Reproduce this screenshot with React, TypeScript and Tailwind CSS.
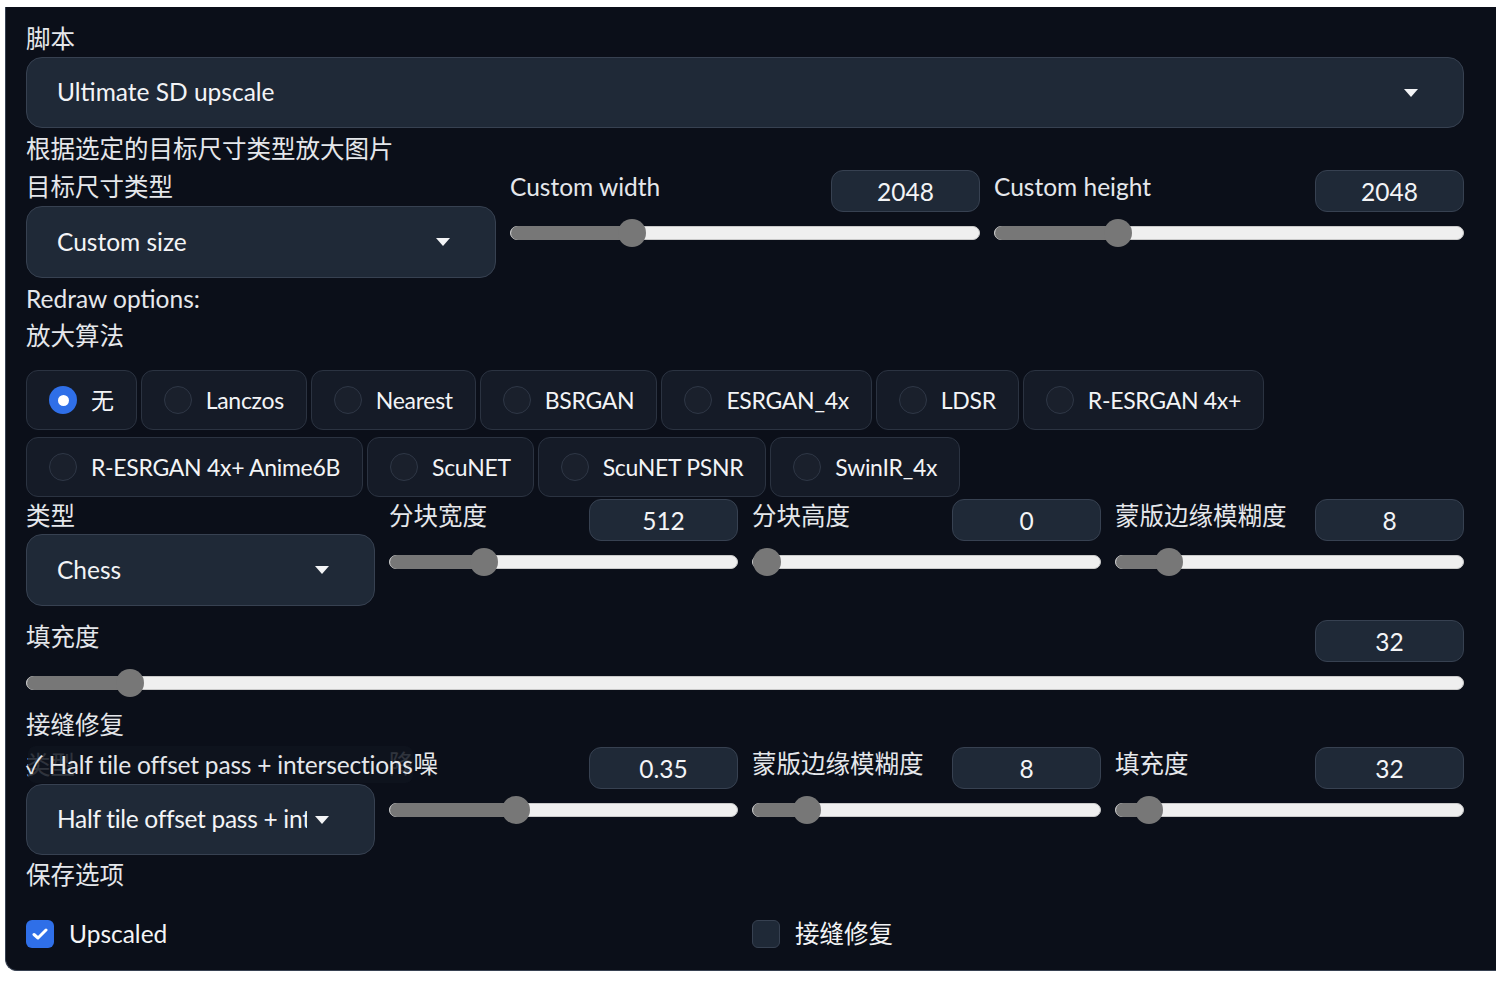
import React from 'react';

const font = { fontFamily: 'Lato, "Noto Sans CJK SC", sans-serif' };

const Caret: React.FC = () => (
  <svg width="14" height="8" viewBox="0 0 14 8" className="shrink-0">
    <polygon points="0,0 14,0 7,8" fill="#f3f4f6" />
  </svg>
);

const Label: React.FC<{ children: React.ReactNode; className?: string }> = ({ children, className = '' }) => (
  <div className={`h-[28px] leading-[28px] text-[24.5px] text-[#e5e7eb] whitespace-nowrap ${className}`}>{children}</div>
);

const Dropdown: React.FC<{ value: string; h?: string; clip?: boolean }> = ({ value, h = 'h-[72px]', clip }) => (
  <div className={`${h} flex items-center justify-between pl-[30px] pr-[45px] rounded-2xl bg-[#1f2937] border border-[#374151] text-[24.5px] text-[#f3f4f6]`}>
    {clip ? (
      <span className="w-[250px] overflow-hidden whitespace-nowrap tracking-[-0.3px]">{value}</span>
    ) : (
      <span className="whitespace-nowrap">{value}</span>
    )}
    <Caret />
  </div>
);

const NumBox: React.FC<{ value: string }> = ({ value }) => (
  <div className="w-[149px] h-[42px] shrink-0 flex items-center justify-center pt-[2px] rounded-xl bg-[#1f2937] border border-[#374151] text-[24.5px] text-[#f3f4f6]">
    {value}
  </div>
);

const Slider: React.FC<{ at: number }> = ({ at }) => (
  <div className="h-[28px] flex items-center">
    <div className="relative w-full h-[14px] rounded-full bg-[#efefef] border border-[#c9c9c9]">
      <div className="absolute left-0 top-[-1px] h-[14px] rounded-l-full bg-[#777777]" style={{ width: at }} />
      <div className="absolute top-1/2 w-[28px] h-[28px] -mt-[14px] rounded-full bg-[#777777]" style={{ left: at - 14 }} />
    </div>
  </div>
);

const SliderField: React.FC<{ label: string; value: string; at: number }> = ({ label, value, at }) => (
  <div className="flex flex-col">
    <div className="h-[42px] flex items-start justify-between">
      <Label className="mt-[3px]">{label}</Label>
      <NumBox value={value} />
    </div>
    <div className="mt-[7px]">
      <Slider at={at} />
    </div>
  </div>
);

const Radio: React.FC<{ label: string; checked?: boolean }> = ({ label, checked }) => (
  <div className="h-[60px] flex items-center gap-[14px] pl-[22px] pr-[22px] rounded-xl bg-[#151b27] border border-[#2b3341] text-[23px] tracking-[-0.3px] text-[#f3f4f6] whitespace-nowrap">
    {checked ? (
      <span className="w-[28px] h-[28px] rounded-full bg-[#2f6fe8] flex items-center justify-center">
        <span className="w-[11px] h-[11px] rounded-full bg-white" />
      </span>
    ) : (
      <span className="w-[28px] h-[28px] rounded-full bg-[#1a202c] border border-[#2f3746]" />
    )}
    <span>{label}</span>
  </div>
);

const Check: React.FC<{ label: string; checked?: boolean }> = ({ label, checked }) => (
  <div className="h-[28px] flex items-center gap-[15px] text-[24.5px] text-[#f3f4f6]">
    {checked ? (
      <span className="w-[28px] h-[28px] rounded-md bg-[#2f6fe8] flex items-center justify-center">
        <svg width="16" height="12" viewBox="0 0 16 12">
          <path d="M2 6.5 L6 10 L14 2" stroke="white" strokeWidth="3" fill="none" strokeLinecap="round" strokeLinejoin="round" />
        </svg>
      </span>
    ) : (
      <span className="w-[28px] h-[28px] rounded-md bg-[#1f2937] border border-[#374151]" />
    )}
    <span>{label}</span>
  </div>
);

export default function App() {
  const row1 = ['Lanczos', 'Nearest', 'BSRGAN', 'ESRGAN_4x', 'LDSR', 'R-ESRGAN 4x+'];
  const row2 = ['R-ESRGAN 4x+ Anime6B', 'ScuNET', 'ScuNET PSNR', 'SwinIR_4x'];

  return (
    <div className="w-[1496px] h-[983px] bg-white overflow-hidden" style={font}>
      <div className="ml-[5px] mt-[7px] w-[1491px] h-[964px] bg-[#0b0f19] border-b border-l border-[#374151] rounded-bl-xl pl-[20px] pt-[18px]">
        <div className="w-[1438px] flex flex-col">
          <Label>脚本</Label>
          <div className="mt-[4px]">
            <Dropdown value="Ultimate SD upscale" h="h-[71px]" />
          </div>
          <Label className="mt-[7px]">根据选定的目标尺寸类型放大图片</Label>

          <div className="mt-[7px] grid grid-cols-3 gap-[14px]">
            <div className="flex flex-col">
              <Label className="mt-[3px]">目标尺寸类型</Label>
              <div className="mt-[5px]">
                <Dropdown value="Custom size" />
              </div>
            </div>
            <SliderField label="Custom width" value="2048" at={121} />
            <SliderField label="Custom height" value="2048" at={123} />
          </div>

          <Label className="mt-[7px]">Redraw options:</Label>
          <Label className="mt-[9px]">放大算法</Label>

          <div className="mt-[20px] flex gap-[4px]">
            <Radio label="无" checked />
            {row1.map((r) => (
              <Radio key={r} label={r} />
            ))}
          </div>
          <div className="mt-[7px] flex gap-[4px]">
            {row2.map((r) => (
              <Radio key={r} label={r} />
            ))}
          </div>

          <div className="mt-[2px] grid grid-cols-4 gap-[14px]">
            <div className="flex flex-col">
              <Label className="mt-[3px]">类型</Label>
              <div className="mt-[4px]">
                <Dropdown value="Chess" />
              </div>
            </div>
            <SliderField label="分块宽度" value="512" at={94} />
            <SliderField label="分块高度" value="0" at={14} />
            <SliderField label="蒙版边缘模糊度" value="8" at={53} />
          </div>

          <div className="mt-[14px]">
            <SliderField label="填充度" value="32" at={103} />
          </div>

          <Label className="mt-[14px]">接缝修复</Label>

          <div className="relative mt-[8px] grid grid-cols-4 gap-[14px]">
            <div className="flex flex-col">
              <Label className="mt-[4px]">类型</Label>
              <div className="mt-[5px]">
                <Dropdown value="Half tile offset pass + intersections" h="h-[71px]" clip />
              </div>
            </div>
            <SliderField label="降噪" value="0.35" at={126} />
            <SliderField label="蒙版边缘模糊度" value="8" at={54} />
            <SliderField label="填充度" value="32" at={33} />
            <div className="absolute left-[2px] top-[-1px] w-[385px] h-[37px] rounded-lg bg-[#0f141f]/85 flex items-center pt-[2px] text-[24.5px] text-[#e5e7eb] whitespace-nowrap">
              <span className="-ml-[2px] tracking-[-0.2px]">✓ Half tile offset pass + intersections</span>
            </div>
          </div>

          <Label className="mt-[6px]">保存选项</Label>

          <div className="mt-[31px] grid grid-cols-2 gap-[14px]">
            <Check label="Upscaled" checked />
            <Check label="接缝修复" />
          </div>
        </div>
      </div>
    </div>
  );
}
